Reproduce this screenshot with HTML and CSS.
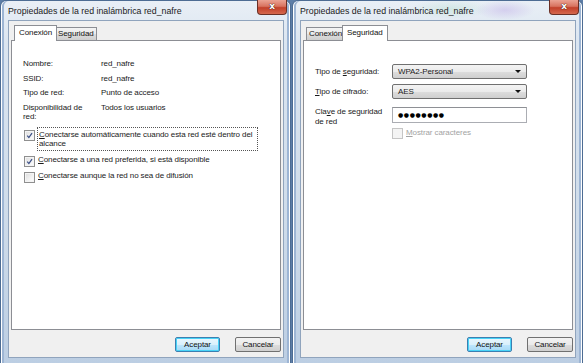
FILE: index.html
```html
<!DOCTYPE html>
<html lang="es">
<head>
  <meta charset="UTF-8">
  <title>Propiedades de la red inalámbrica</title>
  <link rel="stylesheet" href="styles.css">
</head>
<body>
  <div class="desk">

    <!-- Ventana 1: pestaña Conexión -->
    <div class="window">
      <div class="titlebar">
        <span class="title">Propiedades de la red inalámbrica red_nafre</span>
        <span class="close">x</span>
      </div>
      <div class="client">
        <div class="tabs">
          <span class="tab active">Conexión</span>
          <span class="tab">Seguridad</span>
        </div>
        <div class="panel conn">
          <div class="info">
            <div class="row"><span class="key">Nombre:</span><span class="val">red_nafre</span></div>
            <div class="row"><span class="key">SSID:</span><span class="val">red_nafre</span></div>
            <div class="row"><span class="key">Tipo de red:</span><span class="val">Punto de acceso</span></div>
            <div class="row"><span class="key">Disponibilidad de red:</span><span class="val">Todos los usuarios</span></div>
          </div>
          <div class="checks">
            <div class="check first">
              <span class="box"><svg viewBox="0 0 10 10"><path d="M2.5 5.2 L4.3 7.3 L7.8 2.4" /></svg></span>
              <span class="label focus"><u>C</u>onectarse automáticamente cuando esta red esté dentro del<br>alcance</span>
            </div>
            <div class="check">
              <span class="box"><svg viewBox="0 0 10 10"><path d="M2.5 5.2 L4.3 7.3 L7.8 2.4" /></svg></span>
              <span class="label"><u>C</u>onectarse a una red preferida, si está disponible</span>
            </div>
            <div class="check">
              <span class="box"></span>
              <span class="label"><u>C</u>onectarse aunque la red no sea de difusión</span>
            </div>
          </div>
        </div>
        <div class="buttons">
          <span class="btn default">Aceptar</span>
          <span class="btn">Cancelar</span>
        </div>
      </div>
    </div>

    <!-- Ventana 2: pestaña Seguridad -->
    <div class="window">
      <div class="titlebar glow">
        <span class="title">Propiedades de la red inalámbrica red_nafre</span>
        <span class="close">x</span>
      </div>
      <div class="client">
        <div class="tabs">
          <span class="tab">Conexión</span>
          <span class="tab active">Seguridad</span>
        </div>
        <div class="panel sec">
          <div class="form">
            <span class="flabel">Tipo de <u>s</u>eguridad:</span>
            <span class="select">WPA2-Personal<i class="arrow"></i></span>
            <span class="flabel"><u>T</u>ipo de cifrado:</span>
            <span class="select">AES<i class="arrow"></i></span>
            <span class="flabel top">Cla<u>v</u>e de seguridad<br>de red</span>
            <span class="textbox">●●●●●●●●</span>
          </div>
          <div class="check disabled">
            <span class="box"></span>
            <span class="label"><u>M</u>ostrar caracteres</span>
          </div>
        </div>
        <div class="buttons">
          <span class="btn default">Aceptar</span>
          <span class="btn">Cancelar</span>
        </div>
      </div>
    </div>

  </div>
</body>
</html>
```

FILE: styles.css
```css
body {
  margin: 0;
  font-family: 'Liberation Sans', Arial, sans-serif;
  font-size: 8px;
  letter-spacing: -0.1px;
  color: #1a1a1a;
  background: #6f8fb8;
}

.desk {
  display: flex;
  gap: 1px;
  width: 583px;
  height: 363px;
  background: #5d7ea8;
}

.window {
  position: relative;
  width: 291px;
  height: 363px;
  box-sizing: border-box;
  display: flex;
  flex-direction: column;
  padding: 0 6px 5px 7px;
  border: 1px solid #4d6c93;
  border-bottom: none;
  border-radius: 6px 6px 0 0;
  background: linear-gradient(to bottom, #e9eff6 0%, #dbe5f0 12%, #cfdcea 60%, #bccee3 100%);
  box-shadow: inset 1px 0 0 #ffffff, inset 3px 0 0 #9db5d4, inset -1px 0 0 #ffffff, inset -3px 0 0 #9db5d4;
}

.titlebar {
  height: 19px;
  display: flex;
  align-items: center;
}

.titlebar.glow {
  background: radial-gradient(ellipse 30px 10px at 205px 9px, rgba(190, 170, 230, 0.45), transparent),
              radial-gradient(ellipse 40px 10px at 150px 8px, rgba(170, 220, 200, 0.35), transparent);
}

.title {
  font-size: 8.8px;
  letter-spacing: 0;
  color: #1b1b1b;
}

.close {
  position: absolute;
  top: -1px;
  right: 3px;
  width: 30px;
  height: 15px;
  box-sizing: border-box;
  border: 1px solid #6a2f25;
  border-top: none;
  border-radius: 0 0 4px 4px;
  background: linear-gradient(to bottom, #eba394 0%, #d8735f 45%, #c2402a 55%, #d5684e 100%);
  color: #fff;
  font-family: 'DejaVu Sans', sans-serif;
  font-weight: bold;
  font-size: 9px;
  line-height: 13px;
  text-align: center;
  text-shadow: 0 0 1px #3a1a14, 0 0 1px #3a1a14;
}

.client {
  flex: 1;
  display: flex;
  flex-direction: column;
  padding: 4px 2px 5px 2px;
  background: #f0f0f0;
  border: 1px solid #90a4bd;
}

.tabs {
  display: flex;
  align-items: flex-end;
  height: 15px;
  padding-left: 3px;
  position: relative;
  z-index: 1;
}

.tab {
  height: 12px;
  line-height: 12px;
  padding: 0 2px;
  border: 1px solid #8c8e94;
  border-bottom: none;
  margin-right: -1px;
  background: linear-gradient(to bottom, #f3f3f3 0%, #ebebeb 50%, #dddddd 51%, #cfcfcf 100%);
  color: #111;
}

.tab.active {
  height: 15px;
  line-height: 13px;
  padding: 0 4px;
  margin: 0 -2px -1px -2px;
  background: #ffffff;
  position: relative;
  z-index: 2;
}

.tab.active:first-child {
  margin-left: 0;
}

.panel {
  flex: 1;
  background: #ffffff;
  border: 1px solid #8c8e94;
}

.info {
  padding: 18px 0 0 11px;
}

.row {
  display: flex;
  line-height: 9.5px;
  margin-bottom: 5px;
}

.key {
  width: 68px;
  margin-right: 10px;
}

.checks {
  margin-top: 7px;
  padding-left: 12px;
}

.check {
  display: flex;
  align-items: flex-start;
  line-height: 9.5px;
  margin-bottom: 4px;
}

.check.first {
  margin-bottom: 4px;
}

.box {
  width: 9px;
  height: 9px;
  flex: none;
  margin-top: 1px;
  border: 1px solid #8f8f8f;
  background: linear-gradient(135deg, #dcdcdc 0%, #f2f2f2 60%, #ffffff 100%);
  box-shadow: inset 0 0 0 1px #f4f4f4;
}

.box svg {
  display: block;
  width: 9px;
  height: 9px;
}

.box path {
  fill: none;
  stroke: #3b4f86;
  stroke-width: 1.4;
}

.label {
  margin-left: 2px;
  padding: 0 1px;
}

.label.focus {
  margin-top: -2px;
  padding: 2px 2px 1px 1px;
  border: 1px dotted #555;
  width: 216px;
  white-space: nowrap;
}

.form {
  display: grid;
  grid-template-columns: 77px 135px;
  row-gap: 5px;
  padding: 23px 0 0 11px;
  align-items: center;
}

.flabel {
  line-height: 9.5px;
  white-space: nowrap;
}

.flabel.top {
  align-self: start;
  padding-top: 3px;
}

.select {
  position: relative;
  height: 15px;
  box-sizing: border-box;
  padding-left: 5px;
  line-height: 13px;
  border: 1px solid #707070;
  border-radius: 2px;
  background: linear-gradient(to bottom, #f3f3f3 0%, #ebebeb 50%, #dddddd 51%, #cfcfcf 100%);
}

.arrow {
  position: absolute;
  right: 5px;
  top: 5px;
  width: 0;
  height: 0;
  border-left: 3px solid transparent;
  border-right: 3px solid transparent;
  border-top: 3px solid #111;
}

.textbox {
  height: 16px;
  box-sizing: border-box;
  padding-left: 5px;
  border: 1px solid #abadb3;
  border-top-color: #8e9095;
  background: #fff;
  font-family: 'DejaVu Sans', sans-serif;
  font-size: 6px;
  letter-spacing: 0.6px;
  line-height: 14px;
  color: #000;
}

.check.disabled {
  margin-top: 2px;
  padding-left: 88px;
  color: #a3a3a3;
}

.check.disabled .box {
  border-color: #c5c5c5;
  background: #f4f4f4;
  margin-top: 0;
}

.buttons {
  display: flex;
  justify-content: flex-end;
  gap: 15px;
  margin-top: 7px;
}

.btn {
  width: 46px;
  height: 15px;
  box-sizing: border-box;
  text-align: center;
  line-height: 13px;
  border: 1px solid #707070;
  border-radius: 2px;
  background: linear-gradient(to bottom, #f2f2f2 0%, #ebebeb 50%, #dddddd 51%, #cfcfcf 100%);
  color: #111;
}

.btn.default {
  width: 45px;
  border-color: #3c7fb1;
  box-shadow: inset 0 0 0 1px #48d3f7;
  background: linear-gradient(to bottom, #eaf6fd 0%, #d9f0fc 50%, #bee6fd 51%, #a7d9f5 100%);
}
```
